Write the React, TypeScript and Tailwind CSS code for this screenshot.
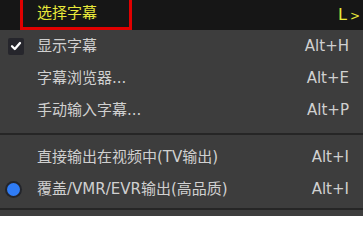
import React from 'react';

type Item = {
    label: string;
    shortcut: string;
    mark?: 'check' | 'radio';
};

const groupA: Item[] = [
    { label: '显示字幕', shortcut: 'Alt+H', mark: 'check' },
    { label: '字幕浏览器...', shortcut: 'Alt+E' },
    { label: '手动输入字幕...', shortcut: 'Alt+P' },
];

const groupB: Item[] = [
    { label: '直接输出在视频中(TV输出)', shortcut: 'Alt+I' },
    { label: '覆盖/VMR/EVR输出(高品质)', shortcut: 'Alt+I', mark: 'radio' },
];

const font = { fontFamily: '"DejaVu Sans", "Noto Sans CJK SC", sans-serif' };

const Mark: React.FC<{ kind?: 'check' | 'radio' }> = ({ kind }) => {
    if (kind === 'check') {
        return (
            <div className="w-4 h-[17px] bg-[#26262c] rounded-[2px] flex items-center justify-center">
                <svg width="12" height="12" viewBox="0 0 12 12">
                    <path d="M2 6.2 L4.8 9 L10 3" stroke="#ffffff" strokeWidth="2.3" fill="none" strokeLinecap="round" strokeLinejoin="round" />
                </svg>
            </div>
        );
    }
    if (kind === 'radio') {
        return <div className="ml-[-1px] w-[13px] h-[13px] rounded-full bg-[#2f7cf6] ring-2 ring-[#23252b]" />;
    }
    return null;
};

const Row: React.FC<{ item: Item }> = ({ item }) => (
    <div className="h-8 flex items-center text-[15px] text-[#d0d0d0]">
        <div className="w-[37px] pl-2 flex items-center">
            <Mark kind={item.mark} />
        </div>
        <span className="flex-1">{item.label}</span>
        <span className="pr-[14px]">{item.shortcut}</span>
    </div>
);

export default function App() {
    return (
        <div className="w-[363px] h-[216px] bg-[#3d3d3d] overflow-hidden" style={font}>
            <div className="h-[30px] bg-[#161616] flex items-center">
                <div className="ml-5 w-[112px] h-[30px] border-[3px] border-t-0 border-[#e00000] flex items-center pl-[14px] text-[15px] text-[#e8e83a]">
                    选择字幕
                </div>
                <span className="ml-auto pr-[3px] flex items-baseline gap-[3px] text-[#e8e83a]">
                    <span className="text-[16px]">L</span>
                    <span className="text-[12px]">&gt;</span>
                </span>
            </div>
            <div>
                {groupA.map((it) => (
                    <Row key={it.label} item={it} />
                ))}
                <div className="pt-[7px] pb-[6px]">
                    <div className="h-[2px] bg-[#262626]" />
                </div>
                {groupB.map((it) => (
                    <Row key={it.label} item={it} />
                ))}
                <div className="pt-[3px]">
                    <div className="h-[2px] bg-[#262626]" />
                </div>
            </div>
        </div>
    );
}
